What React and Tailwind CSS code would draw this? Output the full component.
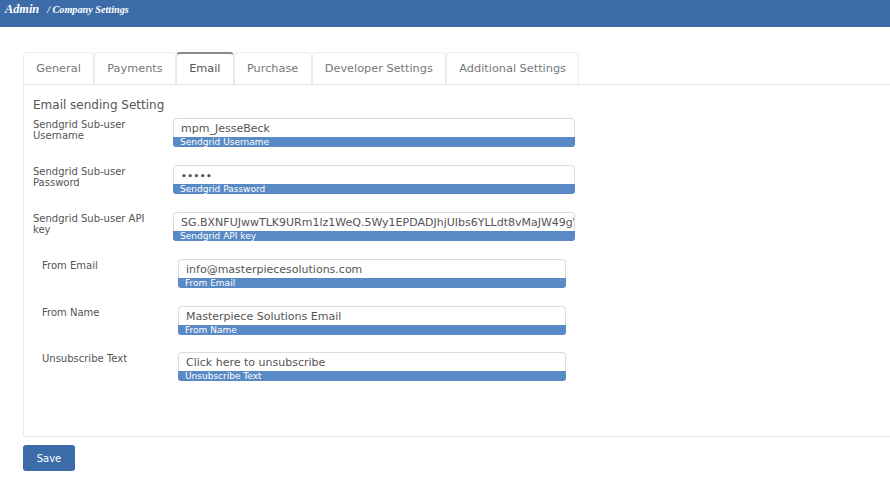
import React from "react";

const tabs = ["General", "Payments", "Email", "Purchase", "Developer Settings", "Additional Settings"];

const topFields = [
  { label: "Sendgrid Sub-user Username", value: "mpm_JesseBeck", hint: "Sendgrid Username" },
  { label: "Sendgrid Sub-user Password", value: "•••••", hint: "Sendgrid Password", secret: true },
  {
    label: "Sendgrid Sub-user API key",
    value: "SG.BXNFUJwwTLK9URm1lz1WeQ.5Wy1EPDADJhjUIbs6YLLdt8vMaJW49gV",
    hint: "Sendgrid API key",
  },
];

const bottomFields = [
  { label: "From Email", value: "info@masterpiecesolutions.com", hint: "From Email" },
  { label: "From Name", value: "Masterpiece Solutions Email", hint: "From Name" },
  { label: "Unsubscribe Text", value: "Click here to unsubscribe", hint: "Unsubscribe Text" },
];

const Field = ({ field, width }) => (
  <div className={width}>
    <div className="h-[19px] border border-b-0 border-[#dcdcdc] rounded-t-[4px] bg-white px-[7px] overflow-hidden whitespace-nowrap text-[11px] leading-[19px] text-[#555]">
      {field.secret ? <span className="text-[9px] font-bold tracking-[0.5px]">{field.value}</span> : field.value}
    </div>
    <div className="h-[10px] bg-[#5a8ac6] rounded-b-[3px] px-[7px] text-[9px] leading-[10px] text-white">
      {field.hint}
    </div>
  </div>
);

export default function App() {
  return (
    <div className="min-h-[483px] bg-white font-['DejaVu_Sans',Verdana,sans-serif] overflow-hidden">
      {/* Top bar */}
      <div className="h-[27px] bg-[#3c6ca8] px-[5px] pt-[2px] font-['Liberation_Serif',serif] italic font-bold text-white whitespace-nowrap text-[12px] leading-[14px]">
        <span className="text-[12.3px]">Admin</span>
        <span className="text-[10.2px] ml-[8px]">/ Company Settings</span>
      </div>

      <div className="pl-[23px] pt-[25px]">
        {/* Tabs */}
        <div className="flex border-b border-[#e6e6e6]">
          {tabs.map((tab) => {
            const active = tab === "Email";
            return (
              <div
                key={tab}
                className={
                  active
                    ? "h-[32px] -mb-px px-[12.25px] bg-white border border-b-0 border-[#e6e6e6] border-t-[#8a8a8a] border-t-2 rounded-t-[4px] text-[11.3px] leading-[30px] text-[#555]"
                    : "h-[32px] px-[12.25px] border border-b-0 border-[#ececec] rounded-t-[4px] text-[11.3px] leading-[32px] text-[#777]"
                }
              >
                {tab}
              </div>
            );
          })}
        </div>

        {/* Panel */}
        <div className="h-[352px] border-l border-b border-[#e9e9e9] pl-[9px] pt-[13px]">
          <div className="text-[12px] leading-[14px] text-[#555]">Email sending Setting</div>

          <div className="mt-[6px] flex flex-col gap-[18px]">
            {topFields.map((f) => (
              <div key={f.label} className="flex">
                <div className="w-[140px] pr-[10px] text-[10px] leading-[11px] text-[#555] pt-[1px]">{f.label}</div>
                <Field field={f} width="w-[402px]" />
              </div>
            ))}
          </div>

          <div className="mt-[18px] pl-[9px] flex flex-col gap-[17.5px]">
            {bottomFields.map((f) => (
              <div key={f.label} className="flex">
                <div className="w-[136px] text-[10px] leading-[11px] text-[#555] pt-[1px]">{f.label}</div>
                <Field field={f} width="w-[388px]" />
              </div>
            ))}
          </div>
        </div>

        <button className="mt-[8px] w-[52px] h-[26px] bg-[#3c6ca8] rounded-[3px] text-white text-[10px]">
          Save
        </button>
      </div>
    </div>
  );
}
